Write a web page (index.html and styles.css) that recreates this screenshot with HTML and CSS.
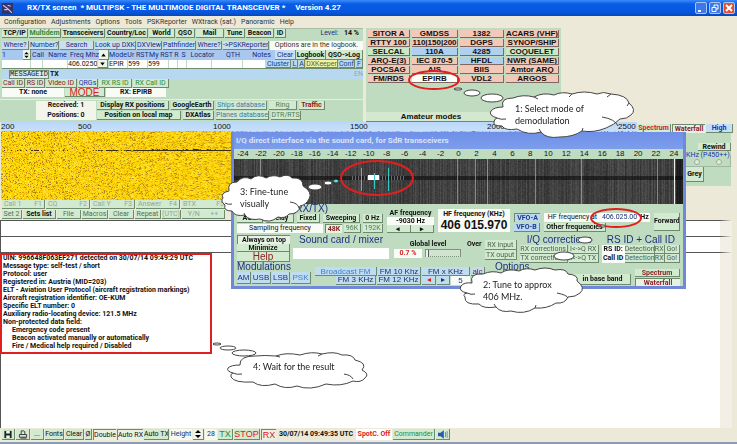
FILE: index.html
```html
<!DOCTYPE html>
<html lang="en">
<head>
<meta charset="utf-8">
<title>RX/TX screen</title>
<link rel="stylesheet" href="styles.css">
</head>
<body>
<header class="titlebar">
  <svg class="app-icon" viewBox="0 0 10 10"><rect width="10" height="10" fill="#303468"/><path d="M1 2l4 3 4 4M2 6h3M5 2l3 1" stroke="#e8b8d8" fill="none"/></svg>
  <h1>RX/TX screen &nbsp;* MULTIPSK - THE MULTIMODE DIGITAL TRANSCEIVER * &nbsp; &nbsp; Version 4.27</h1>
  <button class="win" aria-label="Minimize"><svg viewBox="0 0 10 10"><path d="M2 8h3" stroke="#fff" stroke-width="2"/></svg></button>
  <button class="win" aria-label="Restore"><svg viewBox="0 0 10 10"><path d="M4 4V2h4v4H6M2 4.500h4v4H2z" stroke="#fff" fill="none"/></svg></button>
  <button class="win close" aria-label="Close"><svg viewBox="0 0 10 10"><path d="M2 2l6 6M8 2l-6 6" stroke="#fff" stroke-width="2"/></svg></button>
</header>
<nav class="menu">
  <a href="#">Configuration</a><a href="#">Adjustments</a><a href="#">Options</a><a href="#">Tools</a><a href="#">PSKReporter</a><a href="#">WXtrack (sat.)</a><a href="#">Panoramic</a><a href="#">Help</a>
</nav>

<main>
<section class="top">
  <div class="station">
    <div class="row r-links b">
      <button>TCP/IP</button><button class="green">Multidem</button><button>Transceivers</button><button>Country/Loc</button><button>World</button><button>QSO</button><button>Mail</button><button>Tune</button><button>Beacon</button><button>ID</button>
      <span class="level"><span class="navy n">Level:</span> 14 %</span>
    </div>
    <div class="row r-search navy">
      <button>Where?</button><button>Number?</button><button>Search</button><button>Look up DXK</button><button>DXView</button><button>Pathfinder</button><button>Where?</button><button>-&gt;PSKReporter</button>
      <span class="note">Options are in the logbook.</span>
    </div>
    <div class="row r-head navy">
      <span>1</span><button class="spin" aria-label="Record"><svg viewBox="0 0 6 8"><path d="M3 0l3 3H0zM3 8l3-3H0z"/></svg></button><span>Call</span><span>Name</span><span>Freq Mhz</span><button class="spin" aria-label="Up"><svg viewBox="0 0 6 8"><path d="M3 2l3 4H0z"/></svg></button><span>Mode</span><span>Ur RST</span><span>My RST</span><span>R</span><span>S</span><span>Locator</span><span>QTH</span><span>Notes</span>
      <button class="pale">Clear</button><button class="b dark">Logbook</button><button class="b dark">QSO-&gt;Log</button>
    </div>
    <div class="row r-entry">
      <input aria-label="Number"><input aria-label="Call"><input aria-label="Name"><input aria-label="Freq" value="406.0250"><button class="spin" aria-label="Down"><svg viewBox="0 0 6 8"><path d="M3 6l3-4H0z"/></svg></button><input aria-label="Mode" value="EPIR"><input aria-label="Ur RST" value="599"><input aria-label="My RST" value="599"><input aria-label="R"><input aria-label="S"><input aria-label="Locator"><input aria-label="QTH"><input aria-label="Notes">
      <button class="blue">Cluster</button><button class="blue">L</button><button class="blue">A</button><button class="olive">DXKeeper</button><button class="blue">Conf</button><button class="blue">F</button>
    </div>
    <div class="row r-msg"><span></span><button class="mono">MESSAGEID</button><span class="b">TX</span><span class="lang">EN</span></div>
    <div class="row r-ids">
      <button class="maroon">Call ID</button><button class="maroon">RS ID</button><button class="maroon">Video ID</button><button class="royal">QRGs</button><button class="green">RX RS ID</button><button class="green">RX Call ID</button>
    </div>
    <div class="row r-mode b"><span class="white">TX: none</span><button class="mode">MODE</button><span class="white">RX: EPIRB</span></div>
    <div class="positions">
      <div class="counts b"><span>Received: 1</span><span>Positions: 0</span></div>
      <div class="maps">
        <div class="row m1"><button class="b">Display RX positions</button><button class="b">GoogleEarth</button><button class="steel">Ships database</button><button class="moss">Ring</button><button class="maroon b">Traffic</button></div>
        <div class="row m2"><button class="b">Position on local map</button><button class="b">DXAtlas</button><button class="steel">Planes database</button><button class="moss">DTR/RTS</button></div>
      </div>
    </div>
  </div>

  <div class="modes">
    <div class="mode-grid">
      <button>SITOR A</button><button>GMDSS</button><button>1382</button><button>ACARS (VHF)</button>
      <button>RTTY 100</button><button>110|150|200</button><button>DGPS</button><button>SYNOP/SHIP</button>
      <button class="mint">SELCAL</button><button class="sky">110A</button><button class="sky">4285</button><button class="mint">COQUELET</button>
      <button>ARQ-E(3)</button><button>IEC 870-5</button><button class="sky">HFDL</button><button>NWR (SAME)</button>
      <button>POCSAG</button><button>AIS</button><button>BIIS</button><button>Amtor ARQ</button>
      <button>FM/RDS</button><button class="on">EPIRB</button><button>VDL2</button><button>ARGOS</button>
    </div>
    <button class="amateur">Amateur modes</button>
  </div>
</section>

<section class="scope">
  <div class="spectrum">
    <div class="scale"><span>200</span><span>500</span><span>1000</span><span>1500</span><span>2000</span><span>2500</span></div>
    <canvas id="fall" width="637" height="69"></canvas>
  </div>
  <div class="tools b">
    <div class="row tabs"><button class="red">Spectrum</button><button class="maroon pressed">Waterfall</button><button class="royal high">High</button></div>
    <div class="side">
      <button class="rewind">Rewind</button>
      <fieldset><legend class="royal n">KHz (P450++)</legend><input type="radio" name="k" aria-label="Low"><input type="radio" name="k" aria-label="High"></fieldset>
      <button class="grey">Grey</button>
    </div>
  </div>
</section>

<section class="macros">
  <div class="row k1"><button><span>Call 1</span><span>F1</span></button><button><span>CQ</span><span>F2</span></button><button><span>Call Y</span><span>F3</span></button><button><span>Answer</span><span>F4</span></button><button><span>BTX</span><span>F5</span></button></div>
  <div class="row k2"><button>Set 2</button><button class="b dark">Sets list</button><button>File</button><button>Macros</button><button>Clear</button><button>Repeat</button><button class="faint">(UTC)</button><button class="faint">Y/N &nbsp; &nbsp; &nbsp;++</button></div>
</section>

<section class="texts">
  <textarea aria-label="Transmit text"></textarea>
  <textarea aria-label="Received line"></textarea>
  <div class="output b">
    <div class="result">
      <span>UIN: 996648F063EF271 detected on 30/07/14 09:49:29 UTC</span>
      <span>Message type: self-test / short</span>
      <span>Protocol: user</span>
      <span>Registered in: Austria (MID=203)</span>
      <span>ELT - Aviation User Protocol (aircraft registration markings)</span>
      <span>Aircraft registration identifier: OE-KUM</span>
      <span>Specific ELT number: 0</span>
      <span>Auxiliary radio-locating device: 121.5 MHz</span>
      <span>Non-protected data field:</span>
      <span class="in">Emergency code present</span>
      <span class="in">Beacon activated manually or automatically</span>
      <span class="in">Fire / Medical help required / Disabled</span>
    </div>
  </div>
</section>
</main>

<footer class="status">
  <button aria-label="Save"><svg viewBox="0 0 10 10"><path d="M1 1h8v8H1z" fill="#222"/><path d="M3 1h4v3H3zM3 6h4v3H3z" fill="#dfe"/></svg></button>
  <button aria-label="Print"><svg viewBox="0 0 10 10"><path d="M3 5V1h3l1 1v3M1 5h8v3H1zM2 9h7" stroke="#333" fill="none"/></svg></button>
  <button>...</button><button>Fonts</button><button>Clear</button><button>Ø</button><button class="pressed">Double</button><button class="pressed">Auto RX</button><button>Auto TX</button>
  <label class="navy" for="h">Height</label><button class="spin" aria-label="Change height"><svg viewBox="0 0 6 8"><path d="M3 0l3 3H0zM3 8l3-3H0z"/></svg></button><input id="h" class="navy" value="28">
  <button class="big green">TX</button><button class="big red">STOP</button><button class="big red pressed">RX</button>
  <time class="b">30/07/14 09:49:35 UTC</time><span class="b red spot">SpotC. Off</span><button class="green">Commander</button>
  <button aria-label="Sound"><svg viewBox="0 0 12 10"><path d="M0 3h3l4-3v10L3 7H0z" fill="#2c58b0"/><path d="M9 2v6M11 1v8" stroke="#5a80c0"/></svg></button>
</footer>

<section class="dialog" role="dialog" aria-label="I/Q direct interface">
  <h2>I/Q direct interface via the sound card, for SdR transceivers</h2>
  <div class="client">
    <div class="khz"><span>-24</span><span>-22</span><span>-20</span><span>-18</span><span>-16</span><span>-14</span><span>-12</span><span>-10</span><span>-8</span><span>-6</span><span>-4</span><span>-2</span><span>0</span><span>2</span><span>4</span><span>6</span><span>8</span><span>10</span><span>12</span><span>14</span><span>16</span><span>18</span><span>20</span><span>22</span><span>24</span></div>
    <canvas id="iq" width="449" height="45"></canvas>

    <div class="band a b">
      <div class="tuning">
        <h3>(RX/TX)</h3>
        <div class="row t1"><button>AGC</button><button>Delay</button><button>Fixed</button><button>Sweeping</button><button>0 Hz</button></div>
        <div class="row t2 n"><span class="white">Sampling frequency</span><button class="maroon pressed b">48K</button><button class="moss">96K</button><button class="moss">192K</button></div>
      </div>
      <div class="af"><span>AF frequency</span><span class="white">-9030 Hz</span><div class="pair"><button aria-label="Lower">◂</button><button aria-label="Higher">▸</button></div></div>
      <div class="hf white"><span>HF frequency (KHz)</span><output>406 015.970</output></div>
      <div class="vfo"><button class="pressed">VFO-A</button><button>VFO-B</button></div>
      <div class="at">
        <div class="row white"><label class="n" for="f">HF frequency at</label><input id="f" class="navy n" value="406.025.00"><span class="hz">Hz</span></div>
        <button>Other frequencies</button>
      </div>
      <button class="forward">Forward</button>
    </div>

    <div class="band bb">
      <div class="stack b"><button class="pressed">Always on top</button><button>Minimize</button><button class="help maroon n">Help</button></div>
      <div class="mixer"><h3>Sound card / mixer</h3><input aria-label="Mixer"></div>
      <div class="gain b"><label for="g">Global level</label><div class="row"><span class="white red">0.7 %</span><input id="g" type="range" value="1"></div></div>
      <span class="over b">Over</span>
      <div class="io"><button>RX input</button><button>TX ouput</button></div>
      <div class="corr"><h3>I/Q corrections</h3><div class="row"><button>RX corrections</button><button>I&lt;-&gt;Q RX</button></div><div class="row"><button>TX corrections</button><button>I&lt;-&gt;Q TX</button></div></div>
      <div class="rsid"><h3>RS ID + Call ID</h3><div class="row"><span class="white b">RS ID:</span><button>Detection</button><button>RX</button><button>Go!</button></div><div class="row"><span class="white b">Call ID</span><button>Detection</button><button>RX</button><button>Go!</button></div></div>
    </div>

    <div class="band c">
      <div class="mods"><h3>Modulations</h3><div class="row sans"><button>AM</button><button>USB</button><button>LSB</button><button class="psk">PSK</button></div></div>
      <div class="fm sans">
        <div class="row f1"><button class="psk">Broadcast FM</button><button>FM 10 Khz</button><button>FM x KHz</button><button class="maroon">alc</button></div>
        <div class="row f2"><span></span><button>FM 3 KHz</button><button>FM 12 KHz</button><button class="red" aria-label="Less">◂</button><button aria-label="More">▸</button><output class="white">5</output></div>
      </div>
      <div class="opts"><h3>Options</h3><button class="b">in base band</button></div>
      <div class="views b"><button class="maroon">Spectrum</button><button class="maroon pressed">Waterfall</button></div>
    </div>
  </div>
</section>

<svg class="marks" viewBox="0 0 737 444" aria-hidden="true">
  <g class="ring"><ellipse cx="434" cy="80" rx="25" ry="9"/><ellipse cx="377" cy="178" rx="36" ry="17"/><ellipse cx="616" cy="218" rx="25" ry="9"/></g>
  <g class="puff">
    <ellipse cx="458" cy="89" rx="4" ry="1"/><ellipse cx="472" cy="93" rx="8" ry="3"/><ellipse cx="492" cy="98" rx="11" ry="4"/>
    <path d="M503 107Q500 98 513 98Q523 94 534 97Q543 92 554 95Q562 91 572 94Q584 90 597 94Q603 91 611 94Q627 95 629 103Q637 110 631 115Q627 119 620 119Q614 125 606 128Q594 133 582 131Q573 137 560 137Q546 139 541 132Q528 136 517 129Q505 131 502 126Q493 126 494 122Q494 119 497 118Q488 115 491 111Q494 107 503 107Z"/>
    <path class="line" d="M497 118q4 2 9 1M602 117q13 2 16 9M541 132l-2-3M582 131l1-3M534 97l4 2M572 94l-3 3M611 94l-4 3M629 103l-2 3"/>
    <ellipse cx="603" cy="226" rx="3" ry="1"/><ellipse cx="585" cy="240" rx="7" ry="3"/><ellipse cx="564" cy="256" rx="10" ry="4"/>
    <path d="M472 283Q469 273 483 274Q492 270 501 273Q508 268 519 271Q526 267 535 270Q545 266 555 270Q566 268 568 274Q579 275 577 281Q586 288 580 293Q576 297 568 297Q565 304 556 303Q547 309 535 308Q524 315 511 311Q501 313 496 307Q483 309 479 304Q464 305 465 297Q462 294 467 293Q458 291 461 286Q464 282 472 283Z"/>
    <path class="line" d="M467 293q4 2 8 1M557 293q10 2 11 5M496 307l-2-3M535 308l1-3"/>
    <ellipse cx="315" cy="187" rx="7" ry="3"/><ellipse cx="328" cy="183" rx="4" ry="2"/><ellipse class="teal" cx="336" cy="181" rx="2" ry="1"/>
    <path d="M229 191Q227 182 237 182Q243 175 251 179Q258 173 266 178Q273 174 280 177Q288 173 292 178Q303 177 303 186Q313 192 309 199Q306 205 300 206Q299 214 289 214Q285 219 278 217Q270 224 260 219Q249 221 245 215Q235 217 232 211Q223 211 225 205Q220 201 223 198Q220 193 229 191Z"/>
    <path class="line" d="M225 203q3 2 7 1M290 202q8 1 9 6M245 215l-1-2"/>
    <ellipse cx="217" cy="344" rx="4" ry="1"/><ellipse cx="228" cy="348" rx="8" ry="2"/><ellipse cx="244" cy="353" rx="12" ry="3"/>
    <path d="M240 365Q239 356 255 356Q265 355 276 356Q286 352 300 355Q312 351 322 354Q334 351 342 355Q353 354 355 360Q368 363 362 370Q370 374 365 378Q361 383 353 381Q341 387 326 384Q310 391 297 386Q285 390 275 384Q261 388 253 382Q234 383 231 377Q230 374 233 373Q226 371 228 368Q231 365 240 365Z"/>
    <path class="line" d="M233 373q4 2 9 1M344 374q7 1 9 5M276 356l4 1M322 354l-4 2"/>
  </g>
</svg>
<p class="tip tip1">1: Select mode of<br>demodulation</p>
<p class="tip tip2">2: Tune to approx<br>406 MHz.</p>
<p class="tip tip3">3: Fine-tune<br>visually</p>
<p class="tip tip4">4: Wait for the result</p>
<script src="script.js"></script>
</body>
</html>
```
FILE: styles.css
```css
* { box-sizing: border-box; margin: 0; padding: 0; }
body {
  position: relative;
  display: flex;
  flex-direction: column;
  min-height: 100vh;
  overflow: hidden;
  background: #ece9d8;
  border-bottom: 2px solid #8c9cb4;
  color: #111;
  font: 7px/9px Roboto, sans-serif;
  white-space: nowrap;
}
button, input, textarea, output { font: inherit; color: inherit; min-width: 0; }
button {
  overflow: hidden;
  background: #d2ead0;
  border: 0 solid #6d8a6d;
  border-width: 0 1px 1px 0;
  text-align: center;
}
.pressed { background: #e8f2e4; border-width: 1px 0 0 1px; }
input { width: 100%; border: 0; background: #fff; }
canvas { display: block; width: 100%; }
svg { display: block; }
.row { display: grid; height: 9px; column-gap: 1px; }
.b { font-weight: bold; }
.n { font-weight: normal; }
.mono { font-family: "Liberation Mono", monospace; }
.sans { font-family: "Liberation Sans", sans-serif; }
.navy { color: #1c2c78; }
.green { color: #2c8a3c; }
.maroon { color: #8c2020; }
.red { color: #d82020; }
.royal { color: #2030b8; }
.steel { color: #4078a8; }
.moss { color: #4c7c58; }
.white { background: #f8fbf6; text-align: center; }
.dark { color: #111; }

.titlebar {
  display: flex;
  align-items: center;
  gap: 2px;
  height: 16px;
  padding: 0 2px;
  background: linear-gradient(#3a8cf8, #0a5ce8 25%, #0657e0 75%, #0848b8);
  color: #fff;
}
.app-icon { width: 11px; height: 11px; margin-right: 12px; }
.titlebar h1 { flex: 1; font: bold 8px/14px Roboto, sans-serif; }
.win { width: 12px; height: 12px; background: #3c78e8; border: 1px solid #a8c4f8; border-radius: 2px; }
.close { background: #e05030; }
.menu { display: flex; gap: 5px; height: 12px; padding: 1px 4px; line-height: 10px; }
.menu a { color: #333; text-decoration: none; }
main { flex: 1; display: flex; flex-direction: column; }

.top { display: grid; grid-template-columns: 363px 195px 1fr; column-gap: 3px; height: 94px; }
.station { display: flex; flex-direction: column; background: #c0dcc0; padding-left: 2px; border-top: 1px solid #a8bca8; }
.r-links { grid-template-columns: 26px 32px 43px 42px 26px 19px 28px 20px 28px 11px 1fr; }
.level { text-align: right; padding-right: 4px; }
.level .navy { margin-right: 4px; }
.r-search { margin-top: 3px; grid-template-columns: 27px 29px 34px 41px 25px 33px 25px 46px 1fr; }
.r-search button { background: #c8e0f0; }
.note { background: #f8fbf6; color: #333; text-align: center; }
.r-head { height: 10px; column-gap: 0; grid-template-columns: 21px 8px 14px 25px 29px 10px 18px 22px 24px 7px 7px 31px 30px 27px 21px 30px 1fr; background: #a8c8f0; line-height: 10px; text-align: center; }
.r-head span:first-child { text-align: left; }
.spin { background: #eef4ea; }
.spin svg { width: 5px; height: 6px; margin: 1px auto; }
.pale { background: #c8e0f0; }
.r-entry { grid-template-columns: 28px 11px 24px 29px 10px 18px 19px 20px 8px 8px 24px 30px 22px 25px 6px 6px 32px 16px 1fr; border-bottom: 1px solid #708c70; line-height: 8px; }
.blue { background: #b8d8f4; color: #203c80; }
.olive { background: #f4f0a8; color: #606818; }
.r-msg { margin-top: 1px; grid-template-columns: 6px 40px 12px 1fr; background: #b8d8f0; }
.r-msg .mono { background: #dceaf4; border-width: 1px; line-height: 7px; }
.lang { text-align: right; color: #90a8b8; }
.r-ids { grid-template-columns: 23px 19px 31px 20px 33px 36px; }
.r-mode { grid-template-columns: 62px 40px 60px; }
.mode { color: #d82020; font: 10px/9px "Liberation Sans", sans-serif; }
.positions { display: flex; margin: 2px 0 0 -2px; padding: 1px 0 0 36px; border-top: 1px solid #e4f0e0; }
.counts { display: grid; width: 60px; background: #f4f5ea; text-align: center; margin-right: 1px; }
.maps { display: grid; row-gap: 1px; }
.m1 { grid-template-columns: 72px 43px 51px 28px 26px; column-gap: 2px; }
.m2 { grid-template-columns: 84px 31px 53px 30px; column-gap: 2px; }

.modes { display: flex; flex-direction: column; justify-content: space-between; background: #c0dcc0; }
.mode-grid { display: grid; grid-template-columns: 42px 46px 44px 1fr; grid-auto-rows: 8px; gap: 1px 2px; padding: 2px 2px; font: bold 8px/8px "Liberation Sans", sans-serif; }
.mode-grid button { background: #f4c8b8; border-color: #806860; }
.mode-grid .sky { background: #b0d0f0; }
.mode-grid .mint { background: #c8e8c8; }
.mode-grid .on { background: #fff; }
.amateur { height: 10px; padding-right: 64px; background: #d4e8d0; font: bold 8px/9px "Liberation Sans", sans-serif; }

.scope { display: grid; grid-template-columns: 637px 1fr; height: 78px; }
.spectrum { overflow: hidden; padding-left: 1px; }
.scale { display: grid; grid-template-columns: 69px repeat(4, 137px) 1fr; height: 9px; background: linear-gradient(#b8d8f8, #c8e0f8); font: 8px/9px "Liberation Sans", sans-serif; }
.scale span:nth-child(2) { padding-left: 8px; }
.scale span:nth-child(n+3) { padding-left: 6px; }
.scale span:last-child { padding-left: 0; }
.tools { padding-top: 2px; }
.tabs { grid-template-columns: 34px 33px 27px; }
.tabs .high { background: #c4e0f8; }
.side { display: flex; flex-direction: column; height: 53px; margin: 0 6px 0 48px; padding-top: 10px; background: #c0dcc0; }
.rewind { align-self: flex-end; width: 33px; height: 8px; line-height: 8px; }
.side fieldset { display: flex; justify-content: space-around; height: 16px; border: 1px solid #a0b8a0; }
.side input { width: 6px; height: 6px; opacity: .5; }
.side legend { line-height: 8px; }
.grey { width: 18px; height: 15px; margin-left: 1px; }

.macros { display: grid; height: 20px; row-gap: 1px; padding-left: 2px; color: #567056; align-content: start; }
.k1 { grid-template-columns: 43px 44px 44px 44px 46px; color: #90a890; }
.k1 button { display: flex; justify-content: space-between; padding: 0 2px; }
.k2 { grid-template-columns: 20px 33px 24px 26px 25px 26px 19px 43px; }
.faint { color: #90a890; }

.texts { flex: 1; display: flex; flex-direction: column; margin-right: 5px; border-left: 1px solid #555; }
.texts textarea { display: block; height: 16px; border: 0; border-top: 1px solid #555; border-right: 12px solid #f2f0e6; background: #fff; resize: none; }
.output { flex: 1; padding: 1px 0 0; border-top: 1px solid #555; border-right: 12px solid #f2f0e6; background: #fff; }
.result { display: grid; grid-template-rows: repeat(12, 1fr); width: 210px; height: 99px; padding: 0 2px 9px; outline: 2px solid #e02020; outline-offset: -1px; line-height: 8px; }
.in { padding-left: 9px; }

.status { display: grid; grid-template-columns: 13px 14px 13px 19px 19px 7px 23px 26px 25px 22px 11px 12px 15px 26px 15px 78px 36px 42px 14px; column-gap: 1px; height: 14px; padding: 1px 2px; line-height: 11px; }
.status > * { height: 11px; }
.status svg { width: 10px; height: 9px; margin: 0 auto; }
.status label, .status input { background: #f4faf0; text-align: center; }
.status .spin svg { width: 6px; height: 8px; }
.status .big { font: 9px/10px "Liberation Sans", sans-serif; }
.status time { text-align: center; }
.spot { background: #fff; text-align: center; }

.dialog { position: absolute; left: 231px; top: 132px; width: 455px; padding: 0 3px 3px; background: #7088d8; }
.dialog h2 { height: 17px; font: bold 8px/17px Roboto, sans-serif; color: #d8e4fc; background: linear-gradient(#7090e8, #7c9cec); padding-left: 2px; }
.client { background: #c0dcc0; }
.dialog h3 { font: 10px/10px "Liberation Sans", sans-serif; color: #1c3080; text-align: center; }
.khz { display: grid; grid-template-columns: repeat(25, 1fr); height: 10px; font: 8px/10px "Liberation Sans", sans-serif; text-align: center; }
.band { display: flex; padding: 0 3px; }
.a { height: 31px; gap: 4px; }
.tuning { width: 146px; }
.t1 { grid-template-columns: 26px 28px 23px 37px 1fr; column-gap: 3px; }
.tuning .t2, .tuning .t1 { line-height: 8px; }
.t2 { margin-top: 1px; grid-template-columns: 86px 17px 17px 1fr; column-gap: 2px; }
.af { display: grid; align-content: end; width: 47px; grid-auto-rows: 8px; text-align: center; padding-bottom: 2px; line-height: 8px; }
.pair { display: grid; grid-template-columns: 1fr 1fr; }
.pair button, .f2 button { line-height: 8px; }
.hf { display: grid; width: 72px; margin-top: 5px; height: 23px; align-content: center; }
.hf output { font: bold 12px/12px "Liberation Sans", sans-serif; }
.vfo { display: grid; width: 26px; height: 19px; margin-top: 9px; row-gap: 1px; color: #203c80; }
.vfo button { background: #b8d8f4; }
.at { width: 106px; margin-top: 9px; }
.at .row { grid-template-columns: 57px 36px 1fr; }
.at button { display: block; width: 62px; height: 9px; margin-top: 1px; }
.forward { flex: 1; height: 18px; margin-top: 9px; }
.bb { height: 27px; gap: 3px; }
.stack { display: grid; width: 53px; grid-template-rows: 9px 8px 10px; line-height: 8px; }
.help { font: 10px/9px "Liberation Sans", sans-serif; }
.mixer { width: 96px; }
.mixer input { display: block; height: 11px; margin-top: 3px; }
.gain { width: 70px; padding: 5px 0 0 2px; }
.gain label { display: block; text-align: center; }
.gain .row { grid-template-columns: 28px 36px; column-gap: 3px; }
.gain input { height: 8px; appearance: none; background: #d0e4d0; border: 1px solid #7c947c; border-bottom-style: dotted; }
.gain input::-webkit-slider-thumb { appearance: none; width: 3px; height: 7px; background: #eef4ea; border-right: 1px solid #555; }
.over { padding: 5px 0 0 2px; }
.io { display: grid; width: 32px; grid-auto-rows: 10px; padding-top: 5px; color: #4c6450; }
.corr { width: 79px; color: #4c6450; }
.corr .row { grid-template-columns: 48px 1fr; height: 9px; }
.rsid { flex: 1; }
.rsid .row { grid-template-columns: 23px 30px 10px 1fr; column-gap: 0; height: 9px; }
.rsid button { color: #4c6450; }
.corr button, .rsid button, .io button { line-height: 8px; }
.c { height: 24px; gap: 4px; }
.c h3 { text-align: left; }
.mods { width: 74px; color: #1c3080; }
.mods .row { height: 12px; font-size: 8px; line-height: 11px; grid-template-columns: 14px 19px 18px 1fr; }
.mods button, .fm button { background: #c0dcf0; }
.mods .psk, .fm .psk { color: #3c80c8; }
.fm { width: 170px; padding-top: 5px; font-size: 8px; color: #203060; }
.f1 { grid-template-columns: 62px 43px 48px 1fr; }
.f2 { grid-template-columns: 20px 40px 44px 14px 13px 19px; }
.opts { width: 142px; padding-left: 6px; }
.opts button { display: block; width: 100%; height: 11px; margin-top: 2px; padding-left: 80px; }
.views { display: grid; flex: 1; grid-auto-rows: 8px; align-content: end; row-gap: 1px; line-height: 8px; }

.marks { position: absolute; left: 0; top: 0; width: 737px; height: 444px; pointer-events: none; }
.ring { fill: none; stroke: #e02020; stroke-width: 2; }
.puff { fill: #fff; stroke: #444; stroke-width: 1; }
.puff .line { fill: none; }
.puff .teal { stroke: #30c0c0; }
.tip { position: absolute; font: 9px/12px Lato, sans-serif; color: #222; }
.tip1 { left: 515px; top: 103px; }
.tip2 { left: 483px; top: 279px; }
.tip3 { left: 240px; top: 186px; }
.tip4 { left: 253px; top: 361px; }
```
FILE: script.js
```js
let seed = 7;
function rnd() {
  seed = (seed * 1664525 + 1013904223) % 4294967296;
  return seed / 4294967296;
}

function audioWaterfall() {
  const c = document.getElementById('fall');
  const g = c.getContext('2d');
  const tones = ['#ffd800', '#ffe020', '#f8cc00', '#ffd010', '#ffe840', '#f0b800', '#e0a400', '#a88420'];
  for (let y = 0; y < c.height; y++) {
    for (let x = 0; x < c.width; x++) {
      g.fillStyle = tones[Math.floor(Math.pow(rnd(), 1.5) * tones.length)];
      g.fillRect(x, y, 1, 1);
    }
  }
  g.fillStyle = '#3c3008';
  for (let x = 0; x < 231; x++) {
    if (rnd() < (x < 100 ? 0.25 : x < 135 ? 0.7 : 1)) g.fillRect(x, 19, 1, 1);
    if (x > 150 && rnd() < 0.3) g.fillRect(x, 18, 1, 1);
  }
}

function iqWaterfall() {
  const c = document.getElementById('iq');
  const g = c.getContext('2d');
  for (let x = 0; x < c.width; x++) {
    const base = 44 + rnd() * 26;
    for (let y = 0; y < c.height; y++) {
      const dim = y > 16 && y < 21 ? 0.5 : 1;
      const v = Math.round((base + rnd() * 16) * dim * (x > 441 ? 0.5 : 1));
      g.fillStyle = `rgb(${v},${v},${v})`;
      g.fillRect(x, y, 1, 1);
    }
  }
  g.fillStyle = 'rgba(190,190,190,.6)';
  [26, 223, 241, 253, 301, 347, 423].forEach(x => g.fillRect(x, 0, 1, 45));
  g.fillStyle = '#eee';
  g.fillRect(440, 0, 1, 45);
  g.fillStyle = 'rgba(180,180,180,.5)';
  for (let x = 118; x < 172; x += 3) g.fillRect(x, 17, 1, 4);
  g.fillStyle = '#fff';
  g.fillRect(134, 16, 11, 5);
  g.fillStyle = '#38c8c0';
  [[127, 9], [140, 14], [154, 9]].forEach(([x, y]) => g.fillRect(x, y, 1, y === 9 ? 23 : 16));
}

audioWaterfall();
iqWaterfall();
```
